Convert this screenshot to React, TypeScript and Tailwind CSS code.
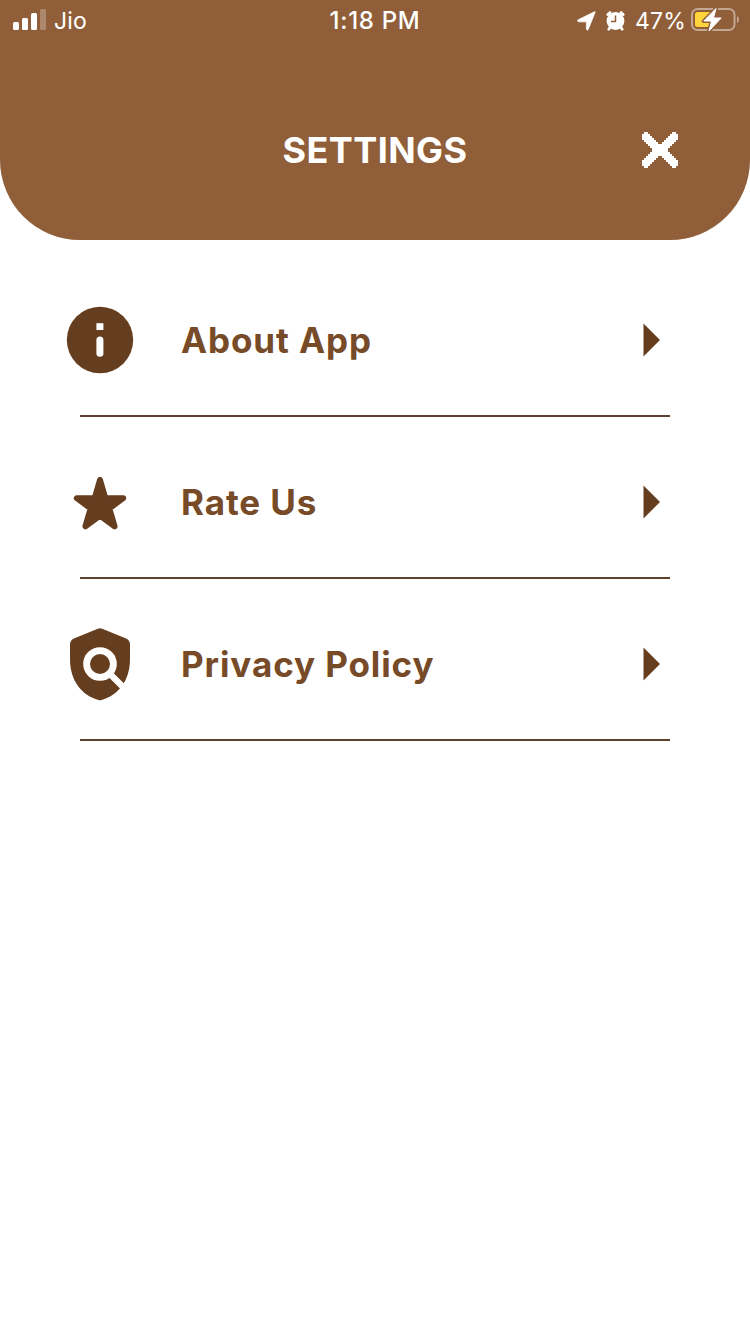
import React from 'react';

// Horizontal runs of the close icon, one row per 2px step: [start, length]
const closeRows = [
  [[1, 2], [15, 2]],
  [[0, 4], [14, 4]],
  [[0, 5], [13, 5]],
  [[0, 6], [12, 6]],
  [[1, 6], [11, 6]],
  [[2, 6], [10, 6]],
  [[3, 12]],
  [[4, 10]],
  [[5, 8]],
];
const allCloseRows = [...closeRows, ...[...closeRows].reverse()];

const CloseIcon = () => (
  <svg className="size-9" viewBox="0 0 18 18" fill="white" shapeRendering="crispEdges">
    {allCloseRows.map((runs, y) =>
      runs.map(([x, w]) => <rect key={`${x}-${y}`} x={x} y={y} width={w} height={1} />)
    )}
  </svg>
);

const InfoIcon = () => (
  <svg className="size-20" viewBox="0 0 80 80">
    <circle cx="40" cy="40" r="33.2" fill="#653E20" />
    <rect x="36.4" y="23.2" width="7" height="6.8" fill="white" />
    <rect x="36.4" y="36.6" width="7" height="20.2" rx="3.5" fill="white" />
  </svg>
);

const StarIcon = () => (
  <svg className="size-20" viewBox="0 0 80 80" fill="#653E20" stroke="#653E20" strokeWidth="6" strokeLinejoin="round">
    <path d="M40 18 L45.3 36.2 H63.2 L49.3 46.4 L54.6 64.3 L40 53.5 L25.4 64.3 L30.7 46.4 L16.8 36.2 H34.7 Z" />
  </svg>
);

const PrivacyIcon = () => (
  <svg className="size-20" viewBox="0 0 80 80">
    <path
      d="M37.8 4.8 Q40 3.6 42.2 4.8 L65.5 14.2 Q70 16 70 20.5 V35 C70 57 58 71.5 41.5 76 Q40 76.6 38.5 76 C22 71.5 10 57 10 35 V20.5 Q10 16 14.5 14.2 Z"
      fill="#653E20"
    />
    <circle cx="40" cy="40" r="13.4" fill="none" stroke="white" strokeWidth="6.8" />
    <path d="M48.5 48.5 L64 64" stroke="white" strokeWidth="6.4" />
  </svg>
);

const items = [
  { label: 'About App', Icon: InfoIcon },
  { label: 'Rate Us', Icon: StarIcon },
  { label: 'Privacy Policy', Icon: PrivacyIcon },
];

const StatusBar = () => (
  <div className="grid h-10 grid-cols-3 items-center text-[23px] leading-10 text-white">
    <div className="flex items-center pl-[13px]">
      <svg className="mb-[2px] h-[21px] w-[33px]" viewBox="0 0 33 21" fill="white">
        <rect x="0" y="13" width="6" height="8" rx="1.5" />
        <rect x="9" y="9" width="6" height="12" rx="1.5" />
        <rect x="18" y="4" width="6" height="17" rx="1.5" />
        <rect x="27" y="0" width="6" height="21" rx="1.5" opacity=".25" />
      </svg>
      <span className="ml-2 tracking-[0.2px]">Jio</span>
    </div>
    <div className="pt-px text-center text-2xl leading-[38px] font-medium tracking-[0.7px]">1:18 PM</div>
    <div className="flex items-center justify-end pr-[11px]">
      <svg className="h-5 w-[19px]" viewBox="0 0 19 20" fill="white">
        <path d="M18 1.5 L11.2 18.5 Q10.2 20 9.4 18.3 V10.8 H1.5 Q-0.5 10 1.2 8.8 L17 1 Q18.8 0.3 18 1.5 Z" stroke="white" strokeWidth="0.8" />
      </svg>
      <svg className="ml-[10px] h-5 w-[19px]" viewBox="0 0 19 20">
        <circle cx="9.5" cy="10" r="8.9" fill="white" />
        <path d="M1.8 3.6 L4 1.6 M17.2 3.6 L15 1.6 M4 16.5 L2.8 18.2 M15 16.5 L16.2 18.2" stroke="white" strokeWidth="2.8" strokeLinecap="round" />
        <path d="M9.5 4.4 V10.4 H5" fill="none" stroke="#905F3A" strokeWidth="1.5" />
      </svg>
      <span className="ml-[10px] pt-px tracking-[0.2px]">47%</span>
      <svg className="mb-[2px] ml-[5px] h-[26px] w-12" viewBox="0 0 48 26">
        <rect x="1" y="2" width="42.5" height="21" rx="5.5" fill="none" stroke="white" strokeOpacity=".45" strokeWidth="2" />
        <path d="M46 9 Q48 10 48 12.5 Q48 15 46 16 Z" fill="white" fillOpacity=".45" />
        <path d="M6.5 5 H22 V20 H6.5 Q4 20 4 17.5 V7.5 Q4 5 6.5 5 Z" fill="#FFD43D" />
        <path d="M25.5 1 L12.5 14.2 H20.5 L17.5 24.5 L30.5 11 H22.5 Z" fill="#905F3A" stroke="#905F3A" strokeWidth="3.5" strokeLinejoin="round" />
        <path d="M25 1.5 L12.8 14 H20.5 L18 24 L30.2 11 H22.5 Z" fill="white" stroke="white" strokeWidth="1" strokeLinejoin="round" />
      </svg>
    </div>
  </div>
);

const App = () => {
  return (
    <div className="min-h-screen w-full bg-white font-['Inter',sans-serif]">
      <header className="h-60 rounded-b-[80px] bg-[#905F3A]">
        <StatusBar />
        <div className="grid h-[220px] grid-cols-[1fr_auto_1fr] items-center px-[72px]">
          <h1 className="col-start-2 text-4xl font-bold tracking-[0.4px] text-white">SETTINGS</h1>
          <button className="justify-self-end" aria-label="Close">
            <CloseIcon />
          </button>
        </div>
      </header>

      <main className="px-20 pt-[15px]">
        {items.map(({ label, Icon }) => (
          <div key={label} className="flex h-[162px] items-center border-b-2 border-[#5E412D] pt-[10px]">
            <div className="-ml-5 shrink-0">
              <Icon />
            </div>
            <span className="ml-[41px] flex-1 text-[35px] leading-10 font-bold tracking-[0.9px] text-[#774B28]">{label}</span>
            <svg className="mr-[10px] h-[34px] w-[17px]" viewBox="0 0 17 34" fill="#653E20">
              <path d="M0.5 0.5 L17 17 L0.5 33.5 Z" />
            </svg>
          </div>
        ))}
      </main>
    </div>
  );
};

export default App;
